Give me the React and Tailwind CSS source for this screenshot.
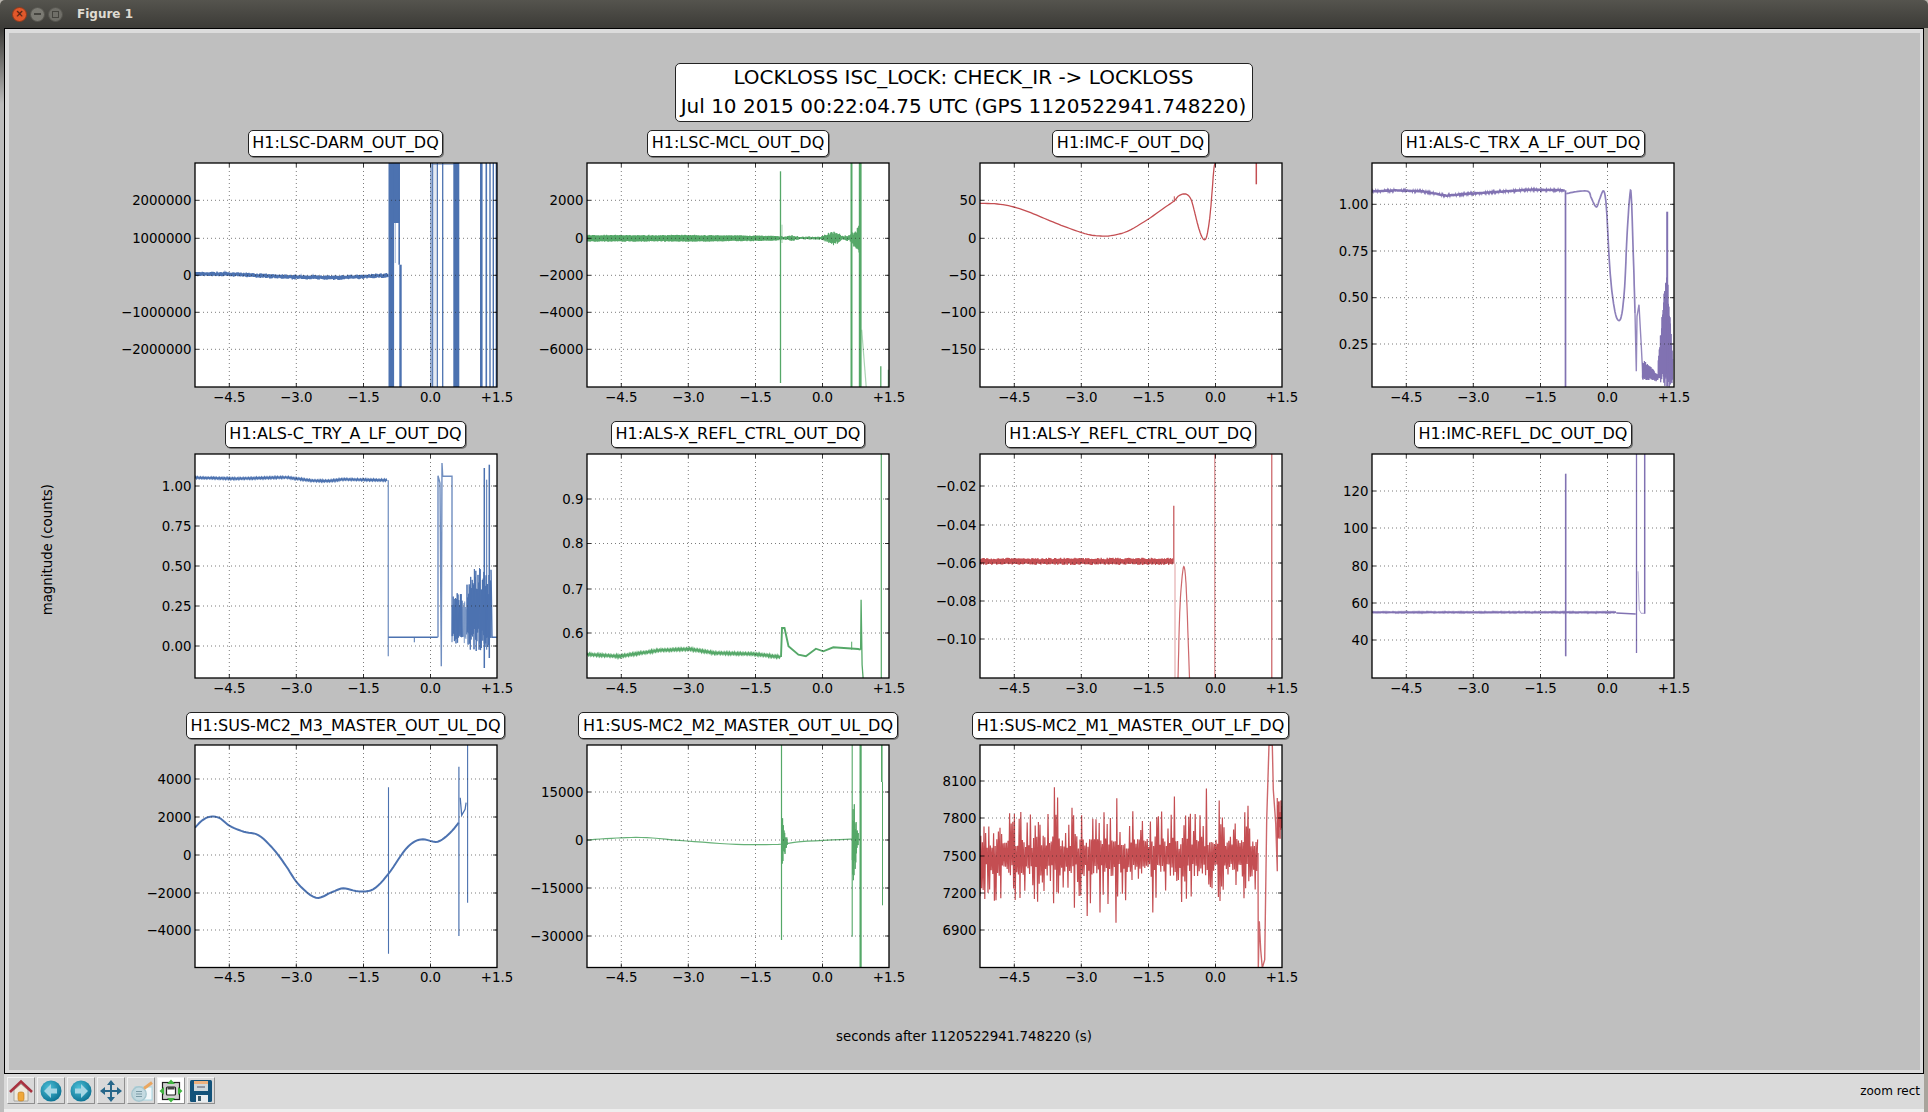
import React from 'react';

const BLUE = '#4c72b0';
const GREEN = '#55a868';
const RED = '#c44e52';
const PURPLE = '#8172b2';

// x ticks sit at the same offset in every axes
const X_TICKS = [
  ['−4.5', 34.3],
  ['−3.0', 101.3],
  ['−1.5', 168.5],
  ['0.0', 235.5],
  ['+1.5', 302],
];

// seeded so the noisy traces stay the same on every render
const makeRng = (seed) => () => {
  seed = (seed + 0x6d2b79f5) | 0;
  let t = Math.imul(seed ^ (seed >>> 15), 1 | seed);
  t = (t + Math.imul(t ^ (t >>> 7), 61 | t)) ^ t;
  return ((t ^ (t >>> 14)) >>> 0) / 4294967296;
};

const lerp = (table) => (x) => {
  if (x <= table[0][0]) return table[0][1];
  for (let i = 1; i < table.length; i++) {
    if (x <= table[i][0]) {
      const [x0, y0] = table[i - 1];
      const [x1, y1] = table[i];
      return y0 + ((x - x0) / (x1 - x0)) * (y1 - y0);
    }
  }
  return table[table.length - 1][1];
};

const zigzag = (rng, x0, x1, step, center, amp, floor = 0.35) => {
  const pts = [];
  let sign = 1;
  for (let x = x0; x <= x1; x += step) {
    pts.push([x, center(x) + sign * amp(x) * (floor + (1 - floor) * rng())]);
    sign = -sign;
  }
  return pts;
};

// catmull-rom through the hand-read points, so curves don't look faceted
const smooth = (pts, n = 6) => {
  const out = [];
  const axis = (a, b, c, d, t, i) =>
    0.5 * (2 * b[i] + (c[i] - a[i]) * t + (2 * a[i] - 5 * b[i] + 4 * c[i] - d[i]) * t * t + (3 * b[i] - a[i] - 3 * c[i] + d[i]) * t * t * t);
  for (let i = 0; i < pts.length - 1; i++) {
    const a = pts[Math.max(i - 1, 0)];
    const b = pts[i];
    const c = pts[i + 1];
    const d = pts[Math.min(i + 2, pts.length - 1)];
    for (let k = 0; k < n; k++) {
      const t = k / n;
      out.push([axis(a, b, c, d, t, 0), axis(a, b, c, d, t, 1)]);
    }
  }
  out.push(pts[pts.length - 1]);
  return out;
};

const v = (x, y0, y1, w = 1, o = 1) => ({ pts: [[x, y0], [x, y1]], w, o });
const line = (pts, w = 1, o = 1) => ({ pts, w, o });
const flat = (y) => () => y;

const rng1 = makeRng(11);
const rng2 = makeRng(22);
const rng4 = makeRng(44);
const rng5 = makeRng(55);
const rng6 = makeRng(66);
const rng7 = makeRng(77);
const rng8 = makeRng(88);
const rng10 = makeRng(100);
const rng11 = makeRng(111);

const noise11 = () => {
  const pts = [];
  let sign = 1;
  for (let x = 58; x <= 892; x += 2.4) {
    const r = rng11();
    let amp = 22 + rng11() * 40;
    if (r > 0.95) amp = 110 + rng11() * 100;
    else if (r > 0.62) amp = 65 + rng11() * 70;
    pts.push([x, 410 + sign * amp]);
    sign = -sign;
  }
  return pts;
};

const PLOTS = [
  {
    title: 'H1:LSC-DARM_OUT_DQ',
    color: BLUE,
    yTicks: [['2000000', 37.3], ['1000000', 75.3], ['0', 112.3], ['−1000000', 149.3], ['−2000000', 186.3]],
    left: 585,
    top: 490,
    lines: [
      line(zigzag(rng1, 585, 1165, 2, lerp([[585, 823], [680, 823], [760, 827], [880, 832], [1000, 834], [1060, 832], [1165, 827]]), flat(7), 0.5), 1.4),
      v(1174, 490, 1165, 5.6),
      v(1190, 490, 670, 6.5),
      v(1197.5, 490, 795, 1.6),
      v(1201.5, 795, 1165, 2.4),
      v(1186, 670, 790, 1, 0.5),
      v(1293, 490, 1165, 1.4, 0.8),
      v(1298, 490, 1165, 1.2),
      v(1312, 490, 1165, 1.3),
      v(1328, 490, 1165, 1.3),
      v(1305, 490, 1165, 1, 0.3),
      line([[1298, 494], [1362, 494]], 1, 0.6),
      v(1369, 490, 1165, 6),
      v(1444, 490, 1165, 2.6),
      v(1459, 490, 1165, 1.6),
      v(1470, 490, 1165, 1.4),
      v(1480, 490, 1165, 1.4),
      v(1489, 490, 1165, 1.4),
    ],
  },
  {
    title: 'H1:LSC-MCL_OUT_DQ',
    color: GREEN,
    yTicks: [['2000', 37.3], ['0', 75.3], ['−2000', 112.3], ['−4000', 149.3], ['−6000', 186.3]],
    left: 142,
    top: 130,
    lines: [
      line(zigzag(rng2, 142, 720, 1.2, flat(356), lerp([[142, 11], [380, 10], [420, 11], [700, 8], [720, 6]]), 0.75), 1.2),
      line(zigzag(rng2, 722, 940, 1.4, flat(355), lerp([[722, 7], [735, 5], [760, 9], [780, 4], [845, 5], [880, 24], [910, 7], [930, 9], [940, 22]]), 0.45), 1),
      line(zigzag(rng2, 940, 962, 1, flat(360), lerp([[940, 22], [950, 30], [960, 50]]), 0.5), 1.1),
      v(722.5, 155, 790, 1.3),
      v(727, 315, 370, 1, 0.5),
      v(935.5, 130, 802, 2),
      v(961.5, 130, 802, 2.8),
      line([[966, 630], [980, 805]], 1.2, 0.5),
      v(1023.5, 740, 802, 1.3),
      v(1046, 750, 802, 1.1, 0.8),
    ],
  },
  {
    title: 'H1:IMC-F_OUT_DQ',
    color: RED,
    yTicks: [['50', 37.3], ['0', 75.3], ['−50', 112.3], ['−100', 149.3], ['−150', 186.3]],
    left: 148,
    top: 115,
    lines: [
      line(smooth([[148, 236], [200, 238], [250, 247], [300, 264], [350, 285], [400, 305], [450, 323], [480, 331], [510, 334], [540, 333], [590, 320], [650, 285], [700, 250], [730, 229], [745, 213], [765, 208], [780, 222], [790, 255], [800, 295], [810, 328], [820, 345], [828, 335], [836, 290], [842, 230], [850, 130], [856, 112]]), 1.3),
      v(731, 215, 231, 1),
      v(977, 115, 179, 1.5),
    ],
  },
  {
    title: 'H1:ALS-C_TRX_A_LF_OUT_DQ',
    color: PURPLE,
    yTicks: [['1.00', 41.3], ['0.75', 88], ['0.50', 134.7], ['0.25', 181]],
    left: 127,
    top: 130,
    lines: [
      line(zigzag(rng4, 127, 706, 1.6, lerp([[127, 215], [200, 212], [280, 215], [350, 228], [420, 222], [500, 217], [600, 210], [706, 212]]), flat(4), 0.6), 1.2),
      v(707.5, 212, 802, 1.7),
      line(smooth([[710, 222], [740, 216], [775, 215], [785, 235], [800, 262], [810, 238], [822, 214], [830, 262], [840, 440], [850, 540], [862, 597], [875, 590], [885, 500], [892, 350], [900, 232], [905, 232], [912, 440], [916, 580]]), 1.7, 0.9),
      line([[916, 580], [920, 755], [922, 590], [928, 555], [935, 680], [940, 780]], 1.4, 0.85),
      line(zigzag(rng4, 938, 985, 0.9, lerp([[938, 750], [950, 755], [985, 775]]), lerp([[938, 30], [950, 28], [985, 10]]), 0.6), 1),
      line(zigzag(rng4, 985, 1029, 0.8, lerp([[985, 755], [1005, 650], [1012, 620], [1020, 690], [1029, 750]]), lerp([[985, 25], [1005, 150], [1012, 180], [1020, 120], [1029, 40]]), 0.7), 1),
      v(1012.5, 276, 800, 2),
    ],
  },
  {
    title: 'H1:ALS-C_TRY_A_LF_OUT_DQ',
    color: BLUE,
    yTicks: [['1.00', 32], ['0.75', 72], ['0.50', 112], ['0.25', 152], ['0.00', 192]],
    left: 77,
    top: 103,
    lines: [
      line(zigzag(rng5, 77, 655, 2.4, lerp([[77, 174], [200, 177], [350, 173], [430, 183], [480, 184], [520, 179], [655, 182]]), flat(3), 0.6), 1.4),
      v(657, 182, 710, 1.4, 0.7),
      line([[657, 653], [805, 653]], 1.6),
      v(735, 653, 668, 1),
      line([[806, 653], [806, 168], [812, 190], [816, 740], [818, 130], [820, 170], [848, 170], [848, 650]], 1.4, 0.8),
      line(zigzag(rng5, 848, 880, 1.2, flat(600), lerp([[848, 70], [870, 85], [880, 70]]), 0.5), 1),
      line(zigzag(rng5, 880, 892, 1.2, flat(610), flat(65), 0.5), 0.8, 0.55),
      line(zigzag(rng5, 892, 965, 1.1, lerp([[892, 590], [915, 565], [965, 580]]), lerp([[892, 100], [915, 130], [945, 125], [965, 110]]), 0.45), 1),
      v(945, 145, 745, 1.5),
      v(952, 180, 690, 1),
      v(960, 135, 715, 1.5),
      line([[965, 450], [968, 653], [982, 653]], 1.4),
    ],
  },
  {
    title: 'H1:ALS-X_REFL_CTRL_OUT_DQ',
    color: GREEN,
    yTicks: [['0.9', 45], ['0.8', 89.5], ['0.7', 135], ['0.6', 179]],
    left: 95,
    top: 103,
    sx: 2.01,
    lines: [
      line(zigzag(rng6, 95, 485, 1.6, lerp([[95, 704], [160, 710], [240, 692], [300, 688], [350, 700], [430, 703], [485, 712]]), flat(4), 0.6), 1.4),
      line([[485, 712], [487, 625], [492, 625], [500, 680], [520, 705], [535, 710], [555, 687], [570, 695], [590, 683], [640, 688], [645, 690]], 1.9),
      v(627, 666, 690, 1),
      line([[645, 690], [646, 540], [648, 735], [650, 775]], 1.3),
      v(686.5, 103, 775, 1.2),
    ],
  },
  {
    title: 'H1:ALS-Y_REFL_CTRL_OUT_DQ',
    color: RED,
    yTicks: [['−0.02', 32], ['−0.04', 71], ['−0.06', 109], ['−0.08', 147], ['−0.10', 185]],
    left: 884,
    top: 103,
    sx: 2.01,
    lines: [
      line(zigzag(rng7, 884, 1272, 1.2, flat(425), flat(11), 0.55), 1.2),
      v(1273.5, 258, 432, 1.2),
      v(1276, 432, 775, 1, 0.55),
      line(smooth([[1282, 775], [1285, 600], [1288, 510], [1293, 442], [1297, 470], [1300, 560], [1305, 775]]), 1.2, 0.85),
      v(1356, 103, 775, 1, 0.8),
      v(1470.5, 103, 775, 1.1),
    ],
  },
  {
    title: 'H1:IMC-REFL_DC_OUT_DQ',
    color: PURPLE,
    yTicks: [['120', 37], ['100', 74], ['80', 112], ['60', 149], ['40', 186]],
    left: 127,
    top: 103,
    lines: [
      line(zigzag(rng8, 127, 860, 3, flat(578), flat(2.2), 0.5), 1.6),
      line([[860, 580], [918, 583]], 1.3),
      v(708, 162, 710, 1.6),
      v(920.5, 103, 700, 1.3),
      line([[925, 455], [929, 570], [934, 581], [945, 581]], 1, 0.6),
      v(945, 103, 582, 1.5),
    ],
  },
  {
    title: 'H1:SUS-MC2_M3_MASTER_OUT_UL_DQ',
    color: BLUE,
    yTicks: [['4000', 34], ['2000', 72], ['0', 110], ['−2000', 148], ['−4000', 185]],
    left: 112,
    top: 107,
    sx: 2.01,
    h: 222.5,
    lines: [
      line(smooth([[112, 355], [125, 335], [140, 323], [160, 325], [182, 350], [210, 367], [240, 378], [270, 420], [295, 470], [320, 525], [355, 565], [385, 550], [410, 537], [440, 546], [470, 540], [500, 495], [530, 430], [550, 400], [570, 390], [600, 397], [625, 370], [642, 340]]), 2),
      v(501, 234, 733, 1.1),
      v(642.5, 172, 680, 1.2),
      line([[645, 265], [648, 318], [655, 300], [657, 280]], 1.3),
      v(660, 107, 580, 1.1),
    ],
  },
  {
    title: 'H1:SUS-MC2_M2_MASTER_OUT_UL_DQ',
    color: GREEN,
    yTicks: [['15000', 47], ['0', 95], ['−15000', 143], ['−30000', 191]],
    left: 900,
    top: 107,
    sx: 2.01,
    h: 222.5,
    lines: [
      line(smooth([[900, 392], [960, 386], [1020, 385], [1100, 395], [1200, 405], [1285, 405], [1330, 397], [1420, 390], [1450, 390]]), 1.2, 0.9),
      v(1291, 107, 692, 1.2),
      line(zigzag(rng10, 1291, 1303, 0.7, flat(402), lerp([[1291, 100], [1296, 55], [1303, 8]])), 1),
      v(1433, 107, 682, 1.1),
      line(zigzag(rng10, 1433, 1446, 0.6, flat(392), lerp([[1433, 120], [1437, 140], [1441, 50], [1446, 20]])), 1),
      v(1450, 107, 775, 2.2),
      v(1492.5, 107, 218, 1.6),
      v(1494, 218, 588, 1),
    ],
  },
  {
    title: 'H1:SUS-MC2_M1_MASTER_OUT_LF_DQ',
    color: RED,
    yTicks: [['8100', 36], ['7800', 73], ['7500', 111], ['7200', 148], ['6900', 185]],
    left: 58,
    top: 76,
    h: 222.5,
    lines: [
      line(noise11(), 1.2),
      line([[892, 400], [893, 745], [896, 605], [900, 690], [905, 745], [912, 720], [918, 300], [925, 76], [935, 76], [938, 210], [945, 310], [950, 455], [950, 235]], 1.4, 0.85),
      line(zigzag(rng11, 950, 965, 1, flat(300), flat(60)), 1),
    ],
  },
];

const toPoints = (pts, left, top, sx) =>
  pts.map(([x, y]) => `${((x - left) / sx).toFixed(1)},${((y - top) / 3).toFixed(1)}`).join(' ');

const Axes = ({ plot }) => {
  const w = 302;
  const h = plot.h || 224;
  const sx = plot.sx || 3;
  return (
    <svg width={w} height={h} className="overflow-visible block bg-white">
      <svg x="0" y="0" width={w} height={h}>
        {plot.lines.map((l, i) => (
          <polyline
            key={i}
            points={toPoints(l.pts, plot.left, plot.top, sx)}
            fill="none"
            stroke={plot.color}
            strokeWidth={l.w}
            strokeOpacity={l.o}
          />
        ))}
      </svg>

      {/* grid */}
      {X_TICKS.slice(0, 4).map(([label, x]) => (
        <line key={label} x1={x} x2={x} y1="0" y2={h} stroke="#222" strokeOpacity="0.75" strokeWidth="0.8" strokeDasharray="1 3" />
      ))}
      {plot.yTicks.map(([label, y]) => (
        <line key={label} x1="0" x2={w} y1={y} y2={y} stroke="#222" strokeOpacity="0.75" strokeWidth="0.8" strokeDasharray="1 3" />
      ))}

      {/* tick marks */}
      {X_TICKS.slice(0, 4).map(([label, x]) => (
        <g key={label} stroke="#000" strokeWidth="0.8">
          <line x1={x} x2={x} y1="0" y2="4" />
          <line x1={x} x2={x} y1={h - 4} y2={h} />
        </g>
      ))}
      {plot.yTicks.map(([label, y]) => (
        <g key={label} stroke="#000" strokeWidth="0.8">
          <line x1="0" x2="4" y1={y} y2={y} />
          <line x1={w - 4} x2={w} y1={y} y2={y} />
        </g>
      ))}

      <rect x="0" y="0" width={w} height={h} fill="none" stroke="#000" strokeWidth="1.3" />

      {/* tick labels */}
      {plot.yTicks.map(([label, y]) => (
        <text key={label} x="-3.5" y={y} textAnchor="end" dominantBaseline="central" className="fill-black text-[13.33px]">
          {label}
        </text>
      ))}
      {X_TICKS.map(([label, x]) => (
        <text key={label} x={x} y={h + 10} textAnchor="middle" dominantBaseline="central" className="fill-black text-[13.33px]">
          {label}
        </text>
      ))}
    </svg>
  );
};

const Plot = ({ plot }) => (
  <div className="flex flex-col items-center">
    <div className="h-[27px] mb-[6px] px-[3.5px] flex items-center bg-white border border-[#222] rounded-[5px] shadow-[1px_1px_0_#777] text-[16px] text-black whitespace-nowrap">
      {plot.title}
    </div>
    <Axes plot={plot} />
  </div>
);

const HomeIcon = () => (
  <svg width="24" height="24" viewBox="0 0 24 24">
    <path d="M5 11v11h14V11L12 5z" fill="#efe9dc" stroke="#9a9a94" strokeWidth="0.8" />
    <rect x="9" y="13" width="6" height="9" rx="2" fill="#f0a83a" stroke="#b87a20" strokeWidth="0.6" />
    <path d="M1 13 12 2.5 23 13" fill="none" stroke="#a8323f" strokeWidth="2.6" />
  </svg>
);

const ArrowIcon = ({ flip, id }) => (
  <svg width="24" height="24" viewBox="0 0 24 24">
    <defs>
      <radialGradient id={id} cx="0.4" cy="0.35" r="0.7">
        <stop offset="0" stopColor="#4cc0d8" />
        <stop offset="1" stopColor="#0a6f90" />
      </radialGradient>
    </defs>
    <circle cx="12" cy="12" r="10.5" fill={`url(#${id})`} />
    <path
      d={flip ? 'M6 9.5h6V5l7 7-7 7v-4.5H6z' : 'M18 9.5h-6V5l-7 7 7 7v-4.5h6z'}
      fill="#a5d6e4"
    />
  </svg>
);

const MoveIcon = () => (
  <svg width="24" height="24" viewBox="0 0 24 24" fill="#27678a">
    <path d="M12 1l4 5h-3v5h5V8l5 4-5 4v-3h-5v5h3l-4 5-4-5h3v-5H6v3l-5-4 5-4v3h5V6H8z" />
  </svg>
);

const ZoomIcon = () => (
  <svg width="24" height="24" viewBox="0 0 24 24">
    <rect x="6" y="8" width="17" height="13" fill="#f2f8fa" stroke="#a8d8e4" strokeWidth="1" />
    <circle cx="10" cy="15" r="7.2" fill="#bcd5dc" stroke="#a6c6cf" strokeWidth="1.4" fillOpacity="0.85" />
    <path d="M7 12.5h6M7 15h6M7 17.5h6" stroke="#7a9aa5" strokeWidth="1" />
    <path d="M15 9.5 23 3.5" stroke="#eaa660" strokeWidth="3" />
  </svg>
);

const SubplotsIcon = () => (
  <svg width="24" height="24" viewBox="0 0 24 24">
    <rect x="3.5" y="3.5" width="17" height="17" fill="#cfcfcf" stroke="#222" strokeWidth="1.2" />
    <rect x="7.5" y="8" width="9" height="8" rx="1" fill="#fff" stroke="#222" strokeWidth="1.2" />
    <rect x="8.5" y="8" width="7" height="2.5" fill="#444" />
    <path d="M12 0.5l4 4.5H8zM12 23.5 8 19h8zM0.5 12 5 8v8zM23.5 12 19 8v8z" fill="#3fb43f" />
  </svg>
);

const SaveIcon = () => (
  <svg width="24" height="24" viewBox="0 0 24 24">
    <rect x="1" y="1" width="22" height="22" rx="1.5" fill="#12527a" />
    <rect x="5" y="2" width="14" height="10" fill="#eeb27e" />
    <rect x="5" y="5" width="14" height="7" fill="#cfd8dc" />
    <path d="M8 8h8" stroke="#556" strokeWidth="1" />
    <rect x="7" y="16" width="12" height="7" fill="#e8edf0" />
    <rect x="9" y="17" width="3" height="5" fill="#385868" />
  </svg>
);

const TOOLS = [
  { key: 'home', icon: <HomeIcon /> },
  { key: 'back', icon: <ArrowIcon id="backFill" /> },
  { key: 'forward', icon: <ArrowIcon id="forwardFill" flip /> },
  { key: 'move', icon: <MoveIcon /> },
  { key: 'zoom', icon: <ZoomIcon /> },
  { key: 'subplots', icon: <SubplotsIcon />, active: true },
  { key: 'save', icon: <SaveIcon /> },
];

const App = () => {
  return (
    <div className="w-[1928px] h-[1112px] flex flex-col overflow-hidden bg-[#b8b4ad] font-['DejaVu_Sans',sans-serif]">
      {/* title bar */}
      <div className="h-[28px] shrink-0 flex items-center rounded-t-[5px] bg-linear-to-b from-[#55544e] to-[#3c3b37]">
        <div className="ml-[12px] w-[15px] h-[15px] rounded-full bg-[#e2582b] border border-[#8e3a1c] flex items-center justify-center text-[#5a2412] text-[10px] leading-none font-bold">
          ×
        </div>
        <div className="ml-[3px] w-[15px] h-[15px] rounded-full bg-[#7b7a73] border border-[#55544e] flex items-center justify-center">
          <div className="w-[7px] h-[1.5px] bg-[#45443f]" />
        </div>
        <div className="ml-[3px] w-[15px] h-[15px] rounded-full bg-[#6f6e68] border border-[#55544e] flex items-center justify-center">
          <div className="w-[7px] h-[7px] border border-[#45443f]" />
        </div>
        <span className="ml-[14px] text-[12px] font-bold text-[#dfdbd2]">Figure 1</span>
      </div>

      <div className="flex-1 flex min-h-0">
        <div className="w-[4px] shrink-0 bg-linear-to-b from-[#3c3b37] to-[#bcbcbc] to-[7%]" />

        <div className="w-[1920px] flex flex-col">
          {/* figure canvas */}
          <div className="h-[1046px] border border-black bg-[#dcdcdc] p-[3.5px]">
            <div className="h-full bg-[#bfbfbf] flex flex-col">
              <div className="ml-[666px] mt-[30px] w-[578px] h-[59px] flex flex-col items-center justify-center bg-white border border-[#222] rounded-[5px] text-[20px] leading-[29.5px] text-black whitespace-nowrap">
                <div>LOCKLOSS ISC_LOCK: CHECK_IR -&gt; LOCKLOSS</div>
                <div>Jul 10 2015 00:22:04.75 UTC (GPS 1120522941.748220)</div>
              </div>

              <div className="flex mt-[8px]">
                <div className="w-[186px] shrink-0 flex items-center pt-[2px]">
                  <span className="ml-[29px] [writing-mode:vertical-rl] rotate-180 text-[13.33px] text-black whitespace-nowrap">
                    magnitude (counts)
                  </span>
                </div>
                <div className="grid grid-cols-[repeat(4,302px)] gap-x-[90.5px] gap-y-[34.25px]">
                  {PLOTS.map((plot) => (
                    <Plot key={plot.title} plot={plot} />
                  ))}
                </div>
              </div>

              <div className="mt-[61px] text-center text-[13.33px] leading-[16px] text-black">
                seconds after 1120522941.748220 (s)
              </div>
            </div>
          </div>

          {/* toolbar */}
          <div className="h-[35px] shrink-0 flex items-start justify-between bg-[#dadada] pt-[3px] pl-[3px] pr-[4px]">
            <div className="flex gap-[2px]">
              {TOOLS.map((tool) => (
                <div
                  key={tool.key}
                  className={`w-[28px] h-[27px] flex items-center justify-center border border-t-[#f2f2f2] border-l-[#f2f2f2] border-r-[#8f8f8f] border-b-[#8f8f8f] ${tool.active ? 'bg-white' : 'bg-[#d9d9d9]'}`}
                >
                  {tool.icon}
                </div>
              ))}
            </div>
            <span className="mt-[6px] text-[12px] leading-[16px] text-black">zoom rect</span>
          </div>
          <div className="h-[3px] shrink-0 bg-[#eeeeee]" />
        </div>

        <div className="w-[4px] shrink-0 bg-[#a8a49c]" />
      </div>
    </div>
  );
};

export default App;
